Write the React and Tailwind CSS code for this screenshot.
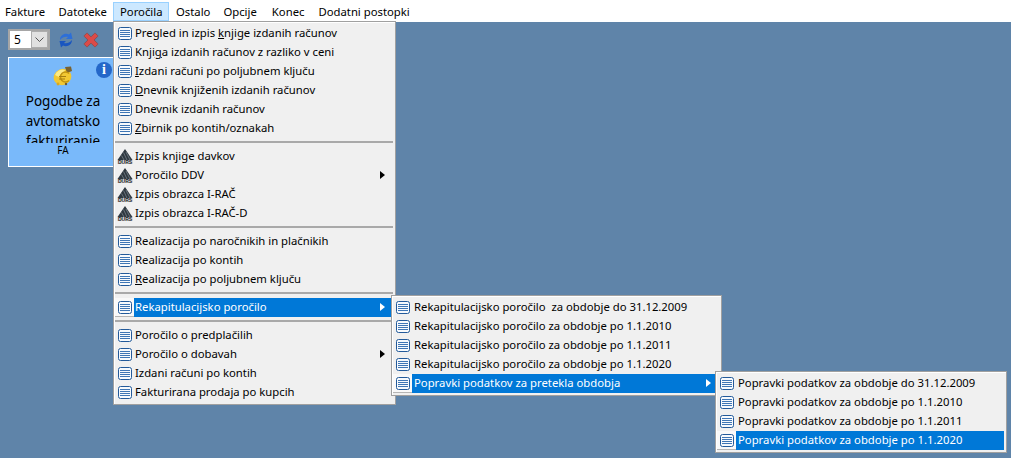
// App.jsx
import React from 'react';

const font = { fontFamily: '"Noto Sans", sans-serif' };

function ListIcon() {
  return (
    <svg width="14" height="13" viewBox="0 0 14 13" className="shrink-0">
      <rect x="0.5" y="0.5" width="13" height="12" rx="2" fill="#f7fafd" stroke="#235a9a" />
      <path d="M2 3h10M2 5h10M2 7h10M2 9h10" stroke="#3f76b5" strokeWidth="1" transform="translate(0 0.5)" />
    </svg>
  );
}

function DursIcon() {
  return (
    <svg width="16" height="15" viewBox="0 0 16 15" className="shrink-0">
      <path d="M8 0 L15.5 11 H0.5 Z" fill="#2f3840" />
      <path d="M6.5 3.5 L10 11 M4.5 6.5 L7 11 M9 3 L13 11" stroke="#8f9aa3" strokeWidth="0.6" />
      <rect x="0" y="11" width="16" height="4" fill="#dcdcdc" />
      <text x="8" y="14.7" textAnchor="middle" fontSize="5" fontWeight="700" fill="#1c2126" fontFamily="Liberation Sans, sans-serif">DURS</text>
    </svg>
  );
}

function Arrow({ white }) {
  return (
    <svg width="5" height="8" viewBox="0 0 5 8" className="shrink-0">
      <path d="M0 0 L5 4 L0 8 Z" fill={white ? '#ffffff' : '#000000'} />
    </svg>
  );
}

function Row({ icon = 'list', label, active, arrow, flyout, children }) {
  return (
    <div className="relative flex h-[19px] items-center">
      <div className={`flex h-[19px] w-[19px] shrink-0 items-center justify-center ${active ? 'border-b border-[#b5b5b5] bg-[#f9f9f9]' : ''}`}>
        {icon === 'durs' ? <DursIcon /> : <ListIcon />}
      </div>
      <div className={`flex h-[19px] flex-1 items-center justify-between pb-[1px] pr-[8px] ${flyout ? 'pl-[2px]' : 'pl-[1px]'} ${active ? 'bg-[#0078d7] text-white' : 'text-black'}`}>
        <span className="whitespace-pre">{label}</span>
        {arrow && <Arrow white={active} />}
      </div>
      {children}
    </div>
  );
}

function Sep() {
  return (
    <div className="flex h-[9px] items-start pt-[3px]">
      <div className="h-[2px] w-full bg-[#a9a9a9]" />
    </div>
  );
}

function Coin() {
  return (
    <svg width="20" height="20" viewBox="0 0 20 20" className="shrink-0">
      <ellipse cx="9.5" cy="11" rx="9" ry="8" fill="#f2c832" transform="rotate(-25 9.5 11)" />
      <path d="M2 9 a8 8 0 0 1 10 -5 L10 8 a4 4 0 0 0 -4 3 Z" fill="#fdeb85" />
      <path d="M12 1 L18 0.5 L19 5 L14 7 Z" fill="#7a6230" />
      <path d="M16 7.5 a5 5 0 1 0 0 7" fill="none" stroke="#c2930f" strokeWidth="1.6" />
      <path d="M6 10.5h7M6 13h6" stroke="#a67e12" strokeWidth="1" />
      <circle cx="13" cy="18" r="1.2" fill="#6f5a2c" />
      <circle cx="5" cy="18" r="1.4" fill="#d8a820" />
    </svg>
  );
}

const u = (before, letter, after) => (
  <>
    {before}
    <span className="underline">{letter}</span>
    {after}
  </>
);

const menus = [
  { name: 'Fakture', cls: 'pl-[5px] pr-[7px]' },
  { name: 'Datoteke', cls: 'px-[6.5px]' },
  { name: 'Poročila', cls: 'border border-[#99d1ff] bg-[#cce8ff] px-[5.5px]' },
  { name: 'Ostalo', cls: 'pl-[7px] pr-[6.5px]' },
  { name: 'Opcije', cls: 'pl-[6.5px] pr-[8.5px]' },
  { name: 'Konec', cls: 'pl-[6.5px] pr-[7.5px]' },
  { name: 'Dodatni postopki', cls: 'px-[6.5px]' },
];

const flyoutBox = 'border border-[#a0a0a0] bg-[#f0f0f0] py-[2px] pl-[1px] pr-[2px] shadow-[inset_1px_1px_0_#ffffff]';

export default function App() {
  return (
    <div style={font} className="relative h-[458px] w-[1011px] overflow-hidden bg-[#5f84a9] text-[11.3px] leading-none">
      {/* menu bar */}
      <div className="flex h-[22px] items-stretch bg-white pb-[1px] pt-[2px] text-black">
        {menus.map((m) => (
          <div key={m.name} className={`flex items-center ${m.cls}`}>
            {m.name}
          </div>
        ))}
      </div>

      {/* toolbar */}
      <div className="flex items-center pl-[8px] pt-[7px]">
        <div className="flex h-[21px] w-[42px] items-center justify-between border-2 border-[#a6a6a6] bg-white pl-[4px] text-[12px]">
          <span>5</span>
          <div className="flex h-[17px] w-[17px] items-center justify-center border border-[#adadad] bg-[#e1e1e1]">
            <svg width="9" height="5" viewBox="0 0 9 5">
              <path d="M0.5 0.5 L4.5 4.5 L8.5 0.5" fill="none" stroke="#555" />
            </svg>
          </div>
        </div>
        <svg width="14" height="16" viewBox="0 0 14 16" className="ml-[9px]">
          <path d="M1 8 C1 3 6 0.5 10 2.5 L12 0.5 L13.5 7 L7 7 L9 5 C6.5 4.2 3.5 5 1 8 Z" fill="#2d6fd8" />
          <path d="M13 8 C13 13 8 15.5 4 13.5 L2 15.5 L0.5 9 L7 9 L5 11 C7.5 11.8 10.5 11 13 8 Z" fill="#1a56c0" />
        </svg>
        <svg width="16" height="16" viewBox="0 0 18 18" className="ml-[10px]">
          <path d="M1.5 4 L4 1.5 Q4.5 1 5 1.5 L9 5.5 L13 1.5 Q13.5 1 14 1.5 L16.5 4 Q17 4.5 16.5 5 L12.5 9 L16.5 13 Q17 13.5 16.5 14 L14 16.5 Q13.5 17 13 16.5 L9 12.5 L5 16.5 Q4.5 17 4 16.5 L1.5 14 Q1 13.5 1.5 13 L5.5 9 L1.5 5 Q1 4.5 1.5 4 Z" fill="#dc4a48" stroke="#8f4a4a" strokeWidth="1" />
        </svg>
      </div>

      {/* card */}
      <div className="relative ml-[8px] mt-[7px] flex h-[110px] w-[110px] flex-col items-center border border-white bg-[#79b9fa] pt-[8px] text-black">
        <Coin />
        <div className="mt-[5px] h-[52px] w-full shrink-0 overflow-hidden text-center text-[13.5px] leading-[20px]">
          Pogodbe za avtomatsko fakturiranje
        </div>
        <div className="mt-[2px] text-[10px]">FA</div>
        <div className="absolute left-[87px] top-[4px] flex h-[16px] w-[16px] items-center justify-center rounded-full bg-[#2467c9] text-[14px] font-bold text-white" style={{ fontFamily: '"Liberation Serif", serif' }}>
          i
        </div>
      </div>

      {/* main dropdown */}
      <div className={`absolute left-[113px] top-[21px] w-[283px] ${flyoutBox}`}>
        <Row label={u('Pregled in izpis ', 'k', 'njige izdanih računov')} />
        <Row label={u('Knji', 'g', 'a izdanih računov z razliko v ceni')} />
        <Row label={u('', 'I', 'zdani računi po poljubnem ključu')} />
        <Row label={u('', 'D', 'nevnik knjiženih izdanih računov')} />
        <Row label="Dnevnik izdanih računov" />
        <Row label={u('', 'Z', 'birnik po kontih/oznakah')} />
        <Sep />
        <Row icon="durs" label="Izpis knjige davkov" />
        <Row icon="durs" label="Poročilo DDV" arrow />
        <Row icon="durs" label="Izpis obrazca I-RAČ" />
        <Row icon="durs" label="Izpis obrazca I-RAČ-D" />
        <Sep />
        <Row label="Realizacija po naročnikih in plačnikih" />
        <Row label="Realizacija po kontih" />
        <Row label={u('', 'R', 'ealizacija po poljubnem ključu')} />
        <Sep />
        <Row label="Rekapitulacijsko poročilo" active arrow>
          {/* first flyout */}
          <div className={`absolute left-[276px] top-[-3px] z-10 w-[331px] ${flyoutBox}`}>
            <Row flyout label="Rekapitulacijsko poročilo  za obdobje do 31.12.2009" />
            <Row flyout label="Rekapitulacijsko poročilo za obdobje po 1.1.2010" />
            <Row flyout label="Rekapitulacijsko poročilo za obdobje po 1.1.2011" />
            <Row flyout label="Rekapitulacijsko poročilo za obdobje po 1.1.2020" />
            <Row flyout label="Popravki podatkov za pretekla obdobja" active arrow>
              {/* second flyout */}
              <div className={`absolute left-[322px] top-[-3px] z-20 w-[292px] ${flyoutBox}`}>
                <Row flyout label="Popravki podatkov za obdobje do 31.12.2009" />
                <Row flyout label="Popravki podatkov za obdobje po 1.1.2010" />
                <Row flyout label="Popravki podatkov za obdobje po 1.1.2011" />
                <Row flyout label="Popravki podatkov za obdobje po 1.1.2020" active />
              </div>
            </Row>
          </div>
        </Row>
        <Sep />
        <Row label="Poročilo o predplačilih" />
        <Row label="Poročilo o dobavah" arrow />
        <Row label="Izdani računi po kontih" />
        <Row label="Fakturirana prodaja po kupcih" />
      </div>
    </div>
  );
}
